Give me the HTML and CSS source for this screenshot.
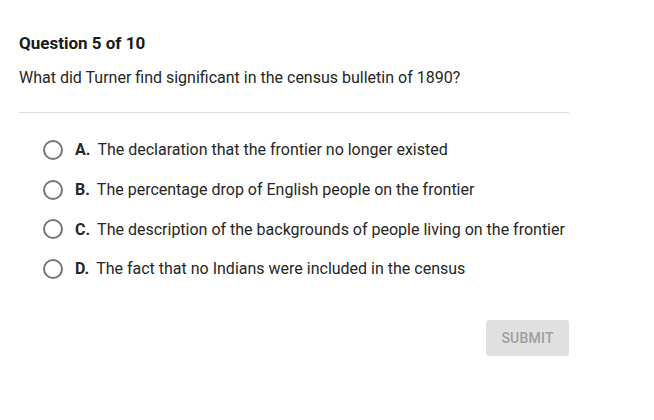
FILE: index.html
```html
<!DOCTYPE html>
<html>
<head>
<meta charset="utf-8">
<link rel="stylesheet" href="styles.css">
</head>
<body>
<div class="quiz">
  <div class="title">Question 5 of 10</div>
  <div class="question">What did Turner find significant in the census bulletin of 1890?</div>
  <div class="divider"></div>
  <div class="options">
    <label class="option"><span class="radio"></span><span class="letter">A.</span><span class="text">The declaration that the frontier no longer existed</span></label>
    <label class="option"><span class="radio"></span><span class="letter">B.</span><span class="text">The percentage drop of English people on the frontier</span></label>
    <label class="option"><span class="radio"></span><span class="letter">C.</span><span class="text">The description of the backgrounds of people living on the frontier</span></label>
    <label class="option"><span class="radio"></span><span class="letter">D.</span><span class="text">The fact that no Indians were included in the census</span></label>
  </div>
  <div class="actions"><button class="submit">SUBMIT</button></div>
</div>
</body>
</html>
```
FILE: styles.css
```css
html, body { margin: 0; padding: 0; background: #fff; }
body { font-family: Roboto, "Liberation Sans", sans-serif; color: #212121; }
.quiz { width: 550px; padding: 33px 0 0 19px; }
.title { font-size: 17px; font-weight: 700; line-height: 20px; color: #1a1a1a; }
.question { font-size: 16px; line-height: 20px; margin-top: 15px; color: #262626; }
.divider { height: 1px; background: #dcdcdc; margin-top: 24px; }
.options { display: flex; flex-direction: column; padding-top: 17px; }
.option { display: flex; align-items: center; height: 39.7px; padding-left: 24px; font-size: 16px; color: #262626; }
.radio { width: 16px; height: 16px; border: 2px solid #757575; border-radius: 50%; flex: none; margin-right: 12px; }
.letter { font-weight: 700; margin-right: 7px; }
.actions { display: flex; justify-content: flex-end; margin-top: 31px; }
.submit { width: 83px; height: 36px; border: none; border-radius: 3px; background: #e0e0e0; color: #9e9e9e; font-family: Roboto, "Liberation Sans", sans-serif; font-size: 14px; font-weight: 500; letter-spacing: 0.2px; }
```
